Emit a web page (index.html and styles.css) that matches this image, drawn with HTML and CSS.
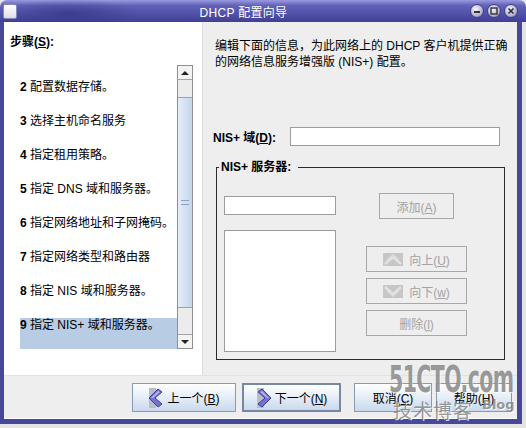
FILE: index.html
```html
<!DOCTYPE html>
<html lang="zh-cn">
  <head>
    <meta charset="utf-8" />
    <title>DHCP 配置向导</title>
    <link rel="stylesheet" href="styles.css">
  </head>
  <body>
    <div class="window">
      <div class="titlebar">
        <span class="app-icon"></span>
        <span class="title">DHCP 配置向导</span>
        <span class="controls">
          <span class="ctl"><svg width="8" height="8" viewBox="0 0 8 8"><rect x="1" y="4" width="6" height="2" fill="#333"/></svg></span>
          <span class="ctl"><svg width="8" height="8" viewBox="0 0 8 8"><rect x="1" y="1" width="6" height="6" fill="none" stroke="#333" stroke-width="1.4"/></svg></span>
          <span class="ctl"><svg width="8" height="8" viewBox="0 0 8 8"><path d="M1.5 1.5 L6.5 6.5 M6.5 1.5 L1.5 6.5" stroke="#333" stroke-width="1.6"/></svg></span>
        </span>
      </div>

      <div class="frame">
        <div class="content">
          <div class="steps">
            <div class="steps-label">步骤(<u>S</u>):</div>
            <div class="steps-box">
              <ul class="steps-list">
                <li><b>2</b> 配置数据存储。</li>
                <li><b>3</b> 选择主机命名服务</li>
                <li><b>4</b> 指定租用策略。</li>
                <li><b>5</b> 指定 DNS 域和服务器。</li>
                <li><b>6</b> 指定网络地址和子网掩码。</li>
                <li><b>7</b> 指定网络类型和路由器</li>
                <li><b>8</b> 指定 NIS 域和服务器。</li>
                <li class="current"><b>9</b> 指定 NIS+ 域和服务器。</li>
              </ul>
              <div class="scrollbar">
                <div class="sb-btn sb-up"><span class="arrow-up"></span></div>
                <div class="sb-thumb"><span class="grip"></span></div>
                <div class="sb-space"></div>
                <div class="sb-btn sb-down"><span class="arrow-down"></span></div>
              </div>
            </div>
          </div>

          <div class="panel">
            <p class="intro">编辑下面的信息，为此网络上的 DHCP 客户机提供正确<br>的网络信息服务增强版 (NIS+) 配置。</p>

            <div class="field-row">
              <label class="field-label">NIS+ 域(<u>D</u>):</label>
              <span class="input wide"></span>
            </div>

            <fieldset class="group">
              <legend>NIS+ 服务器:</legend>
              <div class="group-body">
                <div class="group-left">
                  <span class="input small"></span>
                  <div class="list-box"></div>
                </div>
                <div class="group-right">
                  <span class="btn-off add"><span>添加(<u>A</u>)</span></span>
                  <span class="btn-off move up">
                    <svg width="20" height="13" viewBox="0 0 20 13"><rect width="20" height="13" fill="#c6c6c6"/><path d="M2 11 L10 4 L18 11" fill="none" stroke="#e2e2e2" stroke-width="2.4"/><path d="M4 7 L10 2 L16 7" fill="none" stroke="#dcdcdc" stroke-width="1.6"/></svg>
                    <span>向上(<u>U</u>)</span>
                  </span>
                  <span class="btn-off move">
                    <svg width="20" height="13" viewBox="0 0 20 13"><rect width="20" height="13" fill="#c6c6c6"/><path d="M2 2 L10 9 L18 2" fill="none" stroke="#e2e2e2" stroke-width="2.4"/><path d="M4 6 L10 11 L16 6" fill="none" stroke="#dcdcdc" stroke-width="1.6"/></svg>
                    <span>向下(<u>w</u>)</span>
                  </span>
                  <span class="btn-off move"><span>删除(<u>l</u>)</span></span>
                </div>
              </div>
            </fieldset>
          </div>
        </div>

        <div class="footer">
          <span class="nav-btn prev">
            <svg width="16" height="20" viewBox="0 0 16 20"><rect x="1" y="0" width="7" height="20" fill="#b9bcc9"/><polygon points="10,1 14,4 7,10 14,16 10,19 1,10" fill="#7472d2" stroke="#3e3c92" stroke-width="1"/><polygon points="10,3 12,4 5,10 3,10" fill="#b4b2f0"/></svg>
            <span>上一个(<u>B</u>)</span>
          </span>
          <span class="nav-btn next">
            <svg width="16" height="20" viewBox="0 0 16 20"><rect x="1" y="0" width="7" height="20" fill="#b9bcc9"/><polygon points="6,1 2,4 9,10 2,16 6,19 15,10" fill="#7472d2" stroke="#3e3c92" stroke-width="1"/><polygon points="6,3 4,4 11,10 13,10" fill="#b4b2f0"/></svg>
            <span>下一个(<u>N</u>)</span>
          </span>
          <span class="nav-btn cancel"><span>取消(<u>C</u>)</span></span>
          <span class="nav-btn help"><span>帮助(<u>H</u>)</span></span>
        </div>
      </div>

      <div class="watermark">
        <span class="wm-site">51CTO.com</span>
        <span class="wm-blog">技术博客</span>
        <span class="wm-tag">Blog</span>
      </div>
    </div>
  </body>
</html>
```

FILE: styles.css
```css
* {
  box-sizing: border-box;
}
body {
  margin: 0;
  background: #e4e4e4;
  font-family: "Liberation Sans", "Noto Sans CJK SC", sans-serif;
  font-size: 12px;
  color: #000;
}
u {
  text-decoration: underline;
}
.window {
  position: relative;
  width: 526px;
  height: 428px;
  overflow: hidden;
}

/* title bar */
.titlebar {
  height: 22px;
  display: flex;
  align-items: center;
  padding: 0 8px 0 3px;
  border-radius: 7px 7px 0 0;
  background:
    radial-gradient(ellipse 70px 14px at 70px 13px, rgba(40, 40, 120, 0.5), transparent),
    linear-gradient(#9a9ae0, #6262b8 25%, #5252a8 60%, #3f3f95);
  color: #fff;
}
.app-icon {
  width: 14px;
  height: 15px;
  border: 1px solid #8888b8;
  border-radius: 2px;
  background: linear-gradient(#ffffff, #dedee6);
}
.title {
  flex: 1;
  text-align: center;
  font-size: 12px;
  letter-spacing: 0.3px;
}
.controls {
  display: flex;
  gap: 3px;
}
.ctl {
  width: 14px;
  height: 14px;
  border-radius: 50%;
  display: flex;
  align-items: center;
  justify-content: center;
  background: radial-gradient(circle at 40% 35%, #f6f6fc, #b4b4d2 60%, #6a6a9c);
  border: 1px solid #404088;
}

/* window frame */
.frame {
  margin-right: 4px;
  border: solid #47479c;
  border-width: 0 5px 5px 4px;
}
.content {
  display: flex;
  height: 353px;
}

/* steps column */
.steps {
  width: 199px;
  background: #fff;
  border-right: 1px solid #dcdcdc;
  padding: 12px 0 0 6px;
}
.steps-label {
  font-weight: bold;
  line-height: 16px;
}
.steps-box {
  display: flex;
  width: 173px;
  height: 284px;
  margin: 15px 0 0 10px;
}
.steps-list {
  list-style: none;
  margin: 0;
  padding: 15px 0 0;
  width: 157px;
  overflow: hidden;
}
.steps-list li {
  height: 34px;
  line-height: 14px;
  white-space: nowrap;
}
.steps-list li.current {
  background: #b8cde3;
}
.scrollbar {
  width: 16px;
  display: flex;
  flex-direction: column;
  border: 1px solid #8f8f8f;
  background: #ececec;
}
.sb-btn {
  height: 14px;
  display: flex;
  align-items: center;
  justify-content: center;
  background: #f3f3f3;
}
.sb-up {
  border-bottom: 1px solid #a4a4a4;
}
.sb-down {
  border-top: 1px solid #a4a4a4;
}
.arrow-up {
  border: 4px solid transparent;
  border-bottom: 4px solid #222;
  border-top: none;
}
.arrow-down {
  border: 4px solid transparent;
  border-top: 4px solid #222;
  border-bottom: none;
}
.sb-thumb {
  margin-top: 17px;
  height: 211px;
  display: flex;
  align-items: center;
  justify-content: center;
  border-top: 1px solid #8aa4c6;
  border-bottom: 1px solid #8aa4c6;
  background: linear-gradient(to right, #e6eef8, #c4d6ec);
}
.grip {
  width: 8px;
  height: 5px;
  border-top: 1px solid #8aa0bc;
  border-bottom: 1px solid #8aa0bc;
}
.sb-space {
  flex: 1;
}

/* right panel */
.panel {
  flex: 1;
  background: #eeeeee;
  padding: 16px 0 0 12px;
}
.intro {
  margin: 0;
  line-height: 16px;
}
.field-row {
  display: flex;
  align-items: center;
  margin: 57px 0 0 -2px;
}
.field-label {
  width: 77px;
  font-weight: bold;
}
.input {
  display: block;
  height: 19px;
  background: #fff;
  border: 1px solid #9c9c9c;
}
.input.wide {
  width: 210px;
}
.input.small {
  width: 112px;
}
.group {
  width: 289px;
  margin: 13px 0 0 1px;
  padding: 0 0 7px 7px;
  border: 1px solid #2a2a2a;
}
.group legend {
  margin-left: -5px;
  padding: 0 7px 0 2px;
  line-height: 16px;
  font-weight: bold;
}
.group-body {
  display: flex;
}
.group-left {
  width: 112px;
  margin-top: 21px;
}
.list-box {
  height: 122px;
  margin-top: 15px;
  background: #fff;
  border: 1px solid #9c9c9c;
}
.group-right {
  width: 101px;
  margin: 18px 0 0 30px;
  display: flex;
  flex-direction: column;
  align-items: center;
  gap: 6px;
}
.btn-off {
  height: 26px;
  display: flex;
  align-items: center;
  justify-content: center;
  gap: 6px;
  border: 1px solid #a8a8a8;
  background: #eeeeee;
  color: #a2a2a2;
}
.btn-off.add {
  width: 75px;
}
.btn-off.move {
  width: 101px;
}
.btn-off.up {
  margin-top: 21px;
}

/* footer buttons */
.footer {
  height: 44px;
  display: flex;
  align-items: flex-start;
  padding: 7px 0 0 128px;
  background: #eeeeee;
  border-top: 1px solid #e2e2e2;
  border-bottom: 1px solid #fff;
}
.nav-btn {
  height: 29px;
  display: flex;
  align-items: center;
  justify-content: center;
  gap: 3px;
  border: 1px solid #8a99b2;
  background: linear-gradient(#ffffff, #e8eff8 45%, #c9d9ed);
}
.prev {
  width: 104px;
}
.next {
  width: 99px;
  margin-left: 6px;
  border: 2px solid #7888a2;
}
.cancel {
  width: 78px;
  margin-left: 13px;
}
.help {
  width: 76px;
  margin-left: 4px;
}

/* site watermark over the corner */
.watermark {
  position: absolute;
  left: 389px;
  top: 358px;
  width: 136px;
  height: 70px;
  color: rgba(115, 115, 115, 0.72);
  text-shadow: 1px 1px 0 rgba(255, 255, 255, 0.8);
}
.wm-site {
  position: absolute;
  left: 0;
  top: 0;
  font-family: "DejaVu Sans Condensed", "DejaVu Sans", sans-serif;
  font-weight: bold;
  font-size: 38px;
  line-height: 42px;
  letter-spacing: -1px;
  transform: scaleX(0.6);
  transform-origin: left top;
}
.wm-blog {
  position: absolute;
  left: 4px;
  top: 40px;
  font-family: "Noto Sans CJK SC", sans-serif;
  font-size: 19px;
  line-height: 24px;
  letter-spacing: 1px;
}
.wm-tag {
  position: absolute;
  left: 93px;
  top: 39px;
  font-family: "DejaVu Sans", sans-serif;
  font-weight: bold;
  font-size: 13px;
}
```
